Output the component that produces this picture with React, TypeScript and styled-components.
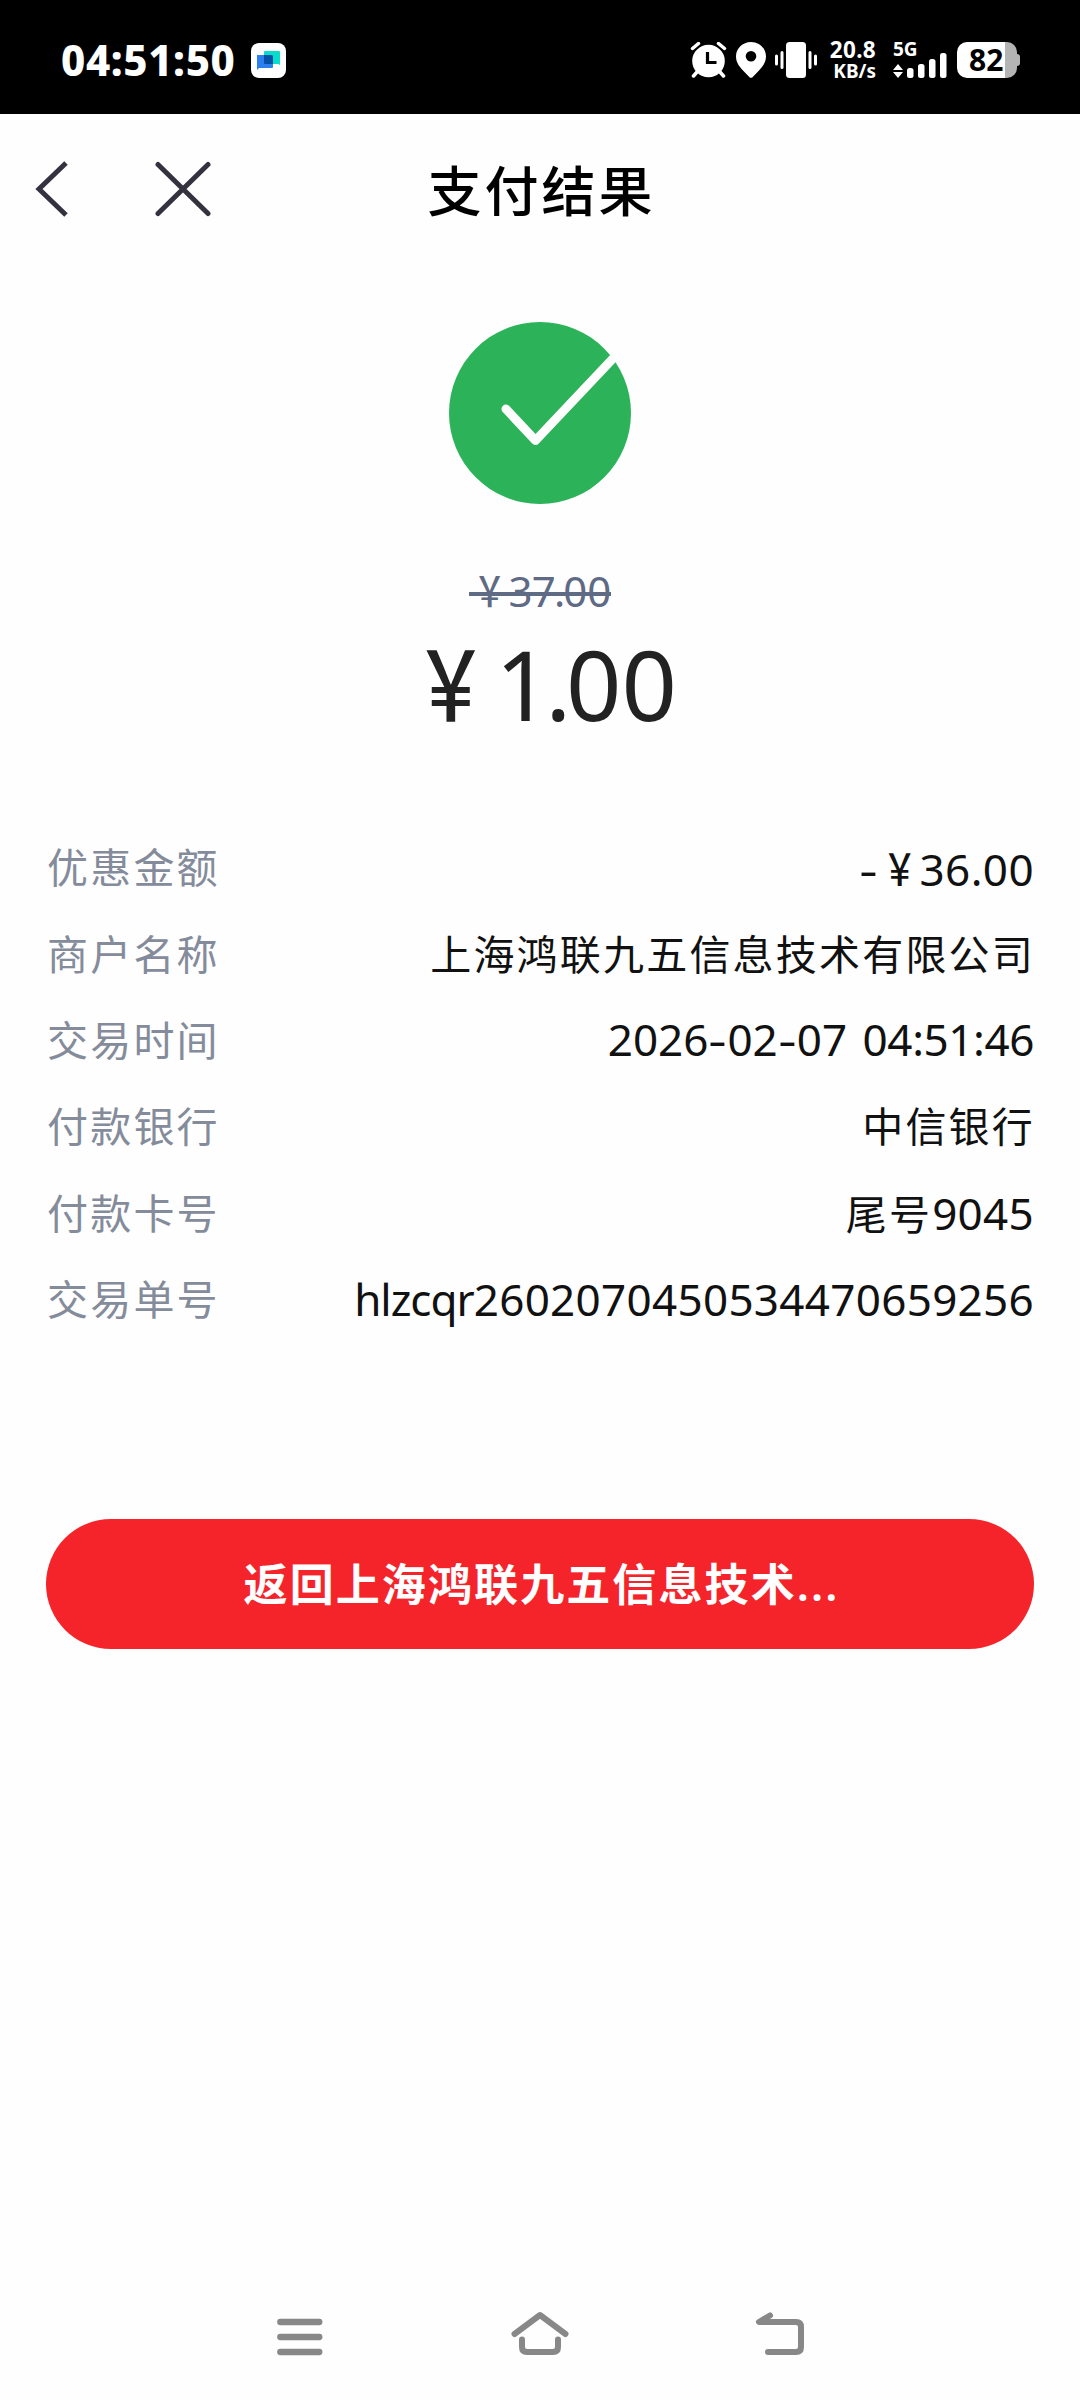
import React from 'react';
import styled, { createGlobalStyle } from 'styled-components';

const GlobalStyle = createGlobalStyle`
  html, body { margin: 0; padding: 0; background: #fefefe; }
  * { box-sizing: border-box; }
`;

const latin = `"Noto Sans", "Noto Sans CJK SC", sans-serif`;

const Screen = styled.div`
  width: 1080px;
  height: 2400px;
  display: flex;
  flex-direction: column;
  background: #fefefe;
  font-family: ${latin};
  overflow: hidden;
`;

const StatusBar = styled.header`
  height: 114px;
  background: #000;
  color: #fff;
  display: flex;
  align-items: center;
  padding: 6px 63px 0 61px;
`;

const Clock = styled.div`
  font-size: 42px;
  font-weight: 800;
  line-height: 50px;
  padding-bottom: 1px;
  letter-spacing: 0.6px;
  width: 190px;
  white-space: nowrap;
`;

const StatusIcons = styled.div`
  margin-left: auto;
  display: flex;
  align-items: center;
`;

const Glyph = styled.svg<{ $gap?: number }>`
  display: block;
  flex: none;
  margin-left: ${(p) => p.$gap ?? 0}px;
`;

const Speed = styled.div`
  width: 59px;
  height: 40px;
  display: flex;
  flex-direction: column;
  justify-content: space-between;
  align-items: flex-end;
  font-weight: 700;
  white-space: nowrap;
`;

const SpeedValue = styled.span`
  font-size: 22.5px;
  line-height: 20px;
  letter-spacing: 0.3px;
`;

const SpeedUnit = styled.span`
  font-size: 19px;
  line-height: 18px;
`;

const Network = styled.div`
  width: 54px;
  height: 36px;
  margin-left: 17px;
  position: relative;
`;

const NetworkName = styled.span`
  position: absolute;
  left: 0;
  top: -2px;
  font-size: 19px;
  font-weight: 700;
  line-height: 18px;
`;

const Battery = styled.div`
  width: 60px;
  height: 36px;
  margin-left: 10px;
  border-radius: 10px;
  background: linear-gradient(to right, #fff 48px, #b4b4b4 48px);
  color: #000;
  font-size: 30px;
  font-weight: 700;
  line-height: 35px;
  padding-left: 12px;
  position: relative;

  &::after {
    content: '';
    position: absolute;
    right: -3px;
    top: 12px;
    width: 3px;
    height: 12px;
    border-radius: 0 3px 3px 0;
    background: #b4b4b4;
  }
`;

const NavBar = styled.nav`
  height: 156px;
  display: grid;
  grid-template-columns: 1fr auto 1fr;
  align-items: center;
  padding: 0 34px;
`;

const NavActions = styled.div`
  display: flex;
  align-items: center;
  gap: 83px;
  padding-bottom: 6px;
`;

const Title = styled.h1`
  margin: 0 -3px 0 0;
  padding-bottom: 2px;
  font-size: 54px;
  font-weight: 500;
  line-height: 70px;
  letter-spacing: 3px;
  color: #000;
`;

const Summary = styled.section`
  height: 555px;
  padding-top: 52px;
  display: flex;
  flex-direction: column;
  align-items: center;
`;

const OriginalPrice = styled.div`
  margin-top: 62px;
  height: 50px;
  line-height: 50px;
  font-size: 42px;
  color: #5f6a84;
  display: flex;
  position: relative;

  &::after {
    content: '';
    position: absolute;
    left: 0;
    right: 0;
    top: 26px;
    height: 4px;
    background: #5f6a84;
  }
`;

const PaidPrice = styled.div`
  margin-top: 7px;
  height: 120px;
  line-height: 120px;
  font-size: 97px;
  color: #222;
  display: flex;
`;

/* Full-width yen sign drawn at the width of a half-width digit. */
const Yen = styled.span`
  display: inline-block;
  width: 0.95em;
  text-align: center;
  font-weight: 500;
  transform: scaleX(0.77);
`;

const Dash = styled.span`
  display: inline-block;
  width: 19px;
  text-align: center;
  transform: scaleX(1.3);
`;

const Tight = styled.span<{ $by: number }>`
  letter-spacing: ${(p) => p.$by}em;
`;

const Details = styled.dl`
  margin: 0;
  height: 519px;
  padding: 0 46px;
  display: flex;
  flex-direction: column;
`;

const Row = styled.div`
  height: 86.4px;
  display: flex;
  justify-content: space-between;
  align-items: center;
  white-space: nowrap;
`;

const Label = styled.dt`
  font-size: 41px;
  letter-spacing: 2.2px;
  padding: 0 0 6px 1px;
  color: #848c9b;
`;

const Value = styled.dd<{ $han?: boolean }>`
  margin: 0 ${(p) => (p.$han ? '-1px' : '0')} 0 0;
  padding-bottom: ${(p) => (p.$han ? 6 : 3)}px;
  font-size: ${(p) => (p.$han ? 41 : 44)}px;
  letter-spacing: ${(p) => (p.$han ? '2.2px' : '0')};
  color: #111;
`;

const Han = styled.span`
  font-size: 41px;
  letter-spacing: 2.2px;
`;

const Tracked = styled.span<{ $by: number }>`
  letter-spacing: ${(p) => p.$by}px;
`;

const ReturnButton = styled.button`
  height: 130px;
  margin: 175px 46px 0;
  padding: 0 0 5px 3px;
  border: 0;
  border-radius: 65px;
  background: #f5242b;
  color: #fff;
  font-family: ${latin};
  font-size: 44px;
  font-weight: 600;
  letter-spacing: 2.1px;
`;

const SystemNav = styled.footer`
  margin-top: auto;
  height: 130px;
  padding: 0 270px;
  display: flex;
  justify-content: space-between;
  align-items: center;
`;

const rows: { label: string; value: React.ReactNode; han?: boolean }[] = [
  { label: '优惠金额', value: <><Dash>-</Dash><Yen>￥</Yen><Tracked $by={0.4}>36.00</Tracked></> },
  { label: '商户名称', value: '上海鸿联九五信息技术有限公司', han: true },
  {
    label: '交易时间',
    value: (
      <>
        2026<Dash>-</Dash>02<Dash>-</Dash>07<Tracked $by={4}> </Tracked>
        <Tracked $by={-0.4}>04:51:46</Tracked>
      </>
    ),
  },
  { label: '付款银行', value: '中信银行', han: true },
  { label: '付款卡号', value: <><Han>尾号</Han><Tracked $by={0.3}>9045</Tracked></> },
  {
    label: '交易单号',
    value: <><Tracked $by={-1}>hlzcqr</Tracked><Tracked $by={0.3}>2602070450534470659256</Tracked></>,
  },
];

export default function App() {
  return (
    <>
      <GlobalStyle />
      <Screen lang="zh-CN">
        <StatusBar>
          <Clock>04:51:50</Clock>
          <Glyph width="35" height="35" viewBox="0 0 35 35">
            <rect width="35" height="35" rx="8" fill="#fff" />
            <path d="M14 8h14q1 0 1 1v13l-2-1H13V9q0-1 1-1z" fill="#08dccb" />
            <path d="M6 12h14q2 0 2 2v10q0 1-1 1H8l-2 2z" fill="#2b80ee" />
            <path d="M13 12h7q2 0 2 2v7h-8q-1 0-1-1z" fill="#0750aa" />
          </Glyph>
          <StatusIcons>
            <Glyph width="37" height="36" viewBox="0 0 37 36">
              <circle cx="18.5" cy="19" r="16.3" fill="#fff" />
              <path d="M2.5 6.5l6-5M34.5 6.5l-6-5M7 30l-3.5 4M30 30l3.5 4" stroke="#fff" strokeWidth="3.5" strokeLinecap="round" />
              <path d="M3.5 9.5L11 3M33.5 9.5L26 3" stroke="#000" strokeWidth="1.5" />
              <path d="M17.5 10v10.5h9" fill="none" stroke="#000" strokeWidth="3.2" />
            </Glyph>
            <Glyph $gap={9} width="30" height="36" viewBox="0 0 30 36">
              <path fillRule="evenodd" fill="#fff" d="M15 0C6.5 0 0 6.5 0 14.5 0 21 4 25 7 28.500L13.500 35.200q1.500 1.300 3 0L23 28.500C26 25 30 21 30 14.500 30 6.500 23.500 0 15 0zM15 9a5.300 5.300 0 1 1 0 10.600A5.300 5.300 0 0 1 15 9z" />
            </Glyph>
            <Glyph $gap={9} width="42" height="36" viewBox="0 0 42 36">
              <rect x="11" width="20" height="36" rx="3.5" fill="#fff" />
              <path d="M1.5 14v8M40.5 14v8M7 10.5v15M35 10.5v15" stroke="#fff" strokeWidth="3" strokeLinecap="round" />
            </Glyph>
            <Speed>
              <SpeedValue>20.8</SpeedValue>
              <SpeedUnit>KB/s</SpeedUnit>
            </Speed>
            <Network>
              <NetworkName>5G</NetworkName>
              <Glyph width="54" height="36" viewBox="0 0 54 36">
                <path d="M0 28l5-6 5 6zM0 30h10l-5 6z" fill="#fff" />
                <rect x="14" y="26" width="6.5" height="10" rx="2.5" fill="#fff" />
                <rect x="25" y="22" width="6.5" height="14" rx="2.5" fill="#fff" />
                <rect x="36" y="17" width="6.5" height="19" rx="2.5" fill="#fff" />
                <rect x="47" y="11" width="6.5" height="25" rx="2.5" fill="#fff" />
              </Glyph>
            </Network>
            <Battery>82</Battery>
          </StatusIcons>
        </StatusBar>

        <NavBar>
          <NavActions>
            <Glyph width="36" height="60" viewBox="0 0 36 60" fill="none" stroke="#34323f" strokeWidth="5">
              <path d="M32 4L5 30l27 26" />
            </Glyph>
            <Glyph width="60" height="56" viewBox="0 0 60 56" fill="none" stroke="#34323f" strokeWidth="5" strokeLinecap="round">
              <path d="M5 3.5l50 49M55 3.5L5 52.5" />
            </Glyph>
          </NavActions>
          <Title>支付结果</Title>
        </NavBar>

        <Summary>
          <Glyph width="182" height="182" viewBox="0 0 182 182">
            <circle cx="91" cy="91" r="91" fill="#2cb35a" />
            <path d="M57 87l29.5 31.5L172 28" fill="none" stroke="#fefefe" strokeWidth="9" strokeLinecap="round" strokeLinejoin="round" />
          </Glyph>
          <OriginalPrice>
            <Yen>￥</Yen>
            <Tight $by={-0.02}>3</Tight>
            <Tight $by={-0.045}>7.</Tight>
            <Tight $by={0}>00</Tight>
          </OriginalPrice>
          <PaidPrice>
            <Yen>￥</Yen>
            <Tight $by={-0.055}>1.</Tight>
            <Tight $by={0}>00</Tight>
          </PaidPrice>
        </Summary>

        <Details>
          {rows.map((r) => (
            <Row key={r.label}>
              <Label>{r.label}</Label>
              <Value $han={r.han}>{r.value}</Value>
            </Row>
          ))}
        </Details>

        <ReturnButton>返回上海鸿联九五信息技术...</ReturnButton>

        <SystemNav>
          <Glyph width="60" height="60" viewBox="0 0 60 60" stroke="#888" strokeWidth="6.3" strokeLinecap="round">
            <path d="M10.3 17h39M10.3 32h39M10.3 47h39" />
          </Glyph>
          <Glyph width="60" height="60" viewBox="0 0 60 60" fill="none" stroke="#888" strokeWidth="6" strokeLinecap="round" strokeLinejoin="round">
            <path d="M4.5 29L30 10l25.5 19M12 34.5V42q0 5 5 5h26q5 0 5-5v-7.5" />
          </Glyph>
          <Glyph width="60" height="60" viewBox="0 0 60 60" fill="none" stroke="#888" strokeWidth="6" strokeLinecap="round" strokeLinejoin="round">
            <path d="M20 10.5L9 17h37q5 0 5 5v20q0 5-5 5H18" />
          </Glyph>
        </SystemNav>
      </Screen>
    </>
  );
}
